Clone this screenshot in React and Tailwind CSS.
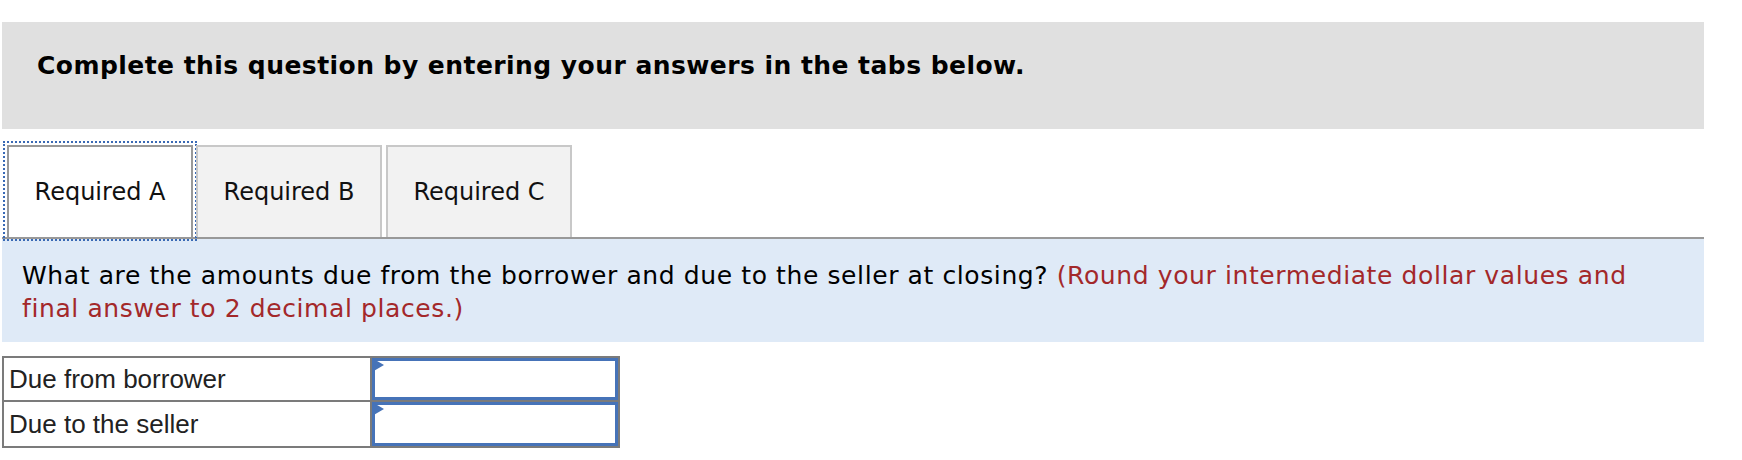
import { useState } from "react";

const tabs = ["Required A", "Required B", "Required C"];

const rows = ["Due from borrower", "Due to the seller"];

export default function App() {
  const [active, setActive] = useState(0);

  return (
    <div className="min-h-[460px] bg-white pt-[22px] pl-[2px]">
      <div className="w-[1702px]">
        {/* Instructions */}
        <div className="bg-[#e0e0e0] pl-[35px] pt-[29px] pb-[48px]">
          <p className="font-['DejaVu_Sans',sans-serif] text-[25px] leading-[30px] tracking-[0.45px] font-bold text-black">
            Complete this question by entering your answers in the tabs below.
          </p>
        </div>

        {/* Tabs */}
        <div className="mt-[16px] flex items-end border-b-2 border-[#999999]">
          {tabs.map((t, i) => (
            <button
              key={t}
              onClick={() => setActive(i)}
              className={`h-[92px] w-[186px] border-2 border-b-0 flex items-center justify-center font-['DejaVu_Sans',sans-serif] text-[24px] text-[#111] ${
                i === 0 ? "ml-[5px]" : i === 1 ? "ml-[3px]" : "ml-[4px]"
              } ${
                active === i
                  ? "bg-white border-[#999999] outline-2 outline-dotted outline-[#3a6ab5] outline-offset-[2px]"
                  : "bg-[#f2f2f2] border-[#c8c8c8]"
              }`}
            >
              {t}
            </button>
          ))}
        </div>

        {/* Question */}
        <div className="bg-[#dfeaf7] pl-[20px] pr-[40px] pt-[20px] pb-[17px]">
          <p className="font-['DejaVu_Sans',sans-serif] text-[25px] leading-[33px] tracking-[0.6px] text-black">
            What are the amounts due from the borrower and due to the seller at closing?{" "}
            <span className="text-[#a3282a]">
              (Round your intermediate dollar values and final answer to 2 decimal places.)
            </span>
          </p>
        </div>
      </div>

      {/* Answer table */}
      <div className="mt-[14px] w-[618px] border-2 border-[#7b7b7b]">
        {rows.map((r, i) => (
          <div key={r} className={`flex h-[44px] ${i === 0 ? "border-b-2 border-[#7b7b7b]" : ""}`}>
            <div className="w-[368px] border-r-2 border-[#7b7b7b] flex items-center pl-[5px] font-['Liberation_Sans',Arial,sans-serif] text-[26px] text-[#222]">
              {r}
            </div>
            <div className="relative flex-1 border-[3px] border-[#4673b8] bg-white">
              <span className="absolute left-[-3px] top-[-3px] h-0 w-0 border-l-[12px] border-l-[#4673b8] border-y-[7px] border-y-transparent" />
              <input className="h-full w-full bg-transparent outline-none px-2 text-[20px]" />
            </div>
          </div>
        ))}
      </div>
    </div>
  );
}
